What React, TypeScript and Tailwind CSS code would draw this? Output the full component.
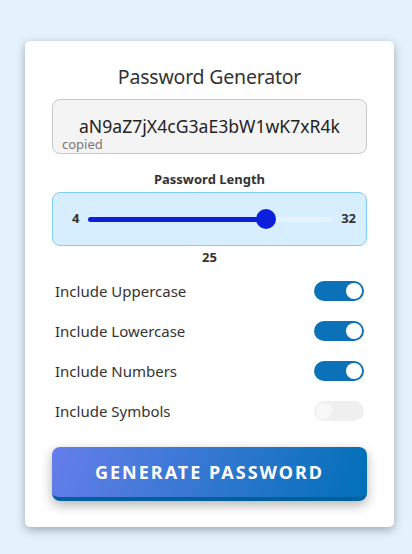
import { useState } from "react";

const options = [
  { key: "upper", label: "Include Uppercase" },
  { key: "lower", label: "Include Lowercase" },
  { key: "numbers", label: "Include Numbers" },
  { key: "symbols", label: "Include Symbols" },
];

function Toggle({ on, onClick }: { on: boolean; onClick: () => void }) {
  return (
    <button
      type="button"
      onClick={onClick}
      className={`flex h-[20px] w-[50px] items-center rounded-full px-[2px] ${
        on ? "justify-end bg-[#0b72b9]" : "justify-start bg-[#efefef]"
      }`}
    >
      <span className={`h-[16px] w-[16px] rounded-full ${on ? "bg-white" : "bg-[#f8f8f8]"}`} />
    </button>
  );
}

export default function App() {
  const [length, setLength] = useState(25);
  const [flags, setFlags] = useState<Record<string, boolean>>({
    upper: true,
    lower: true,
    numbers: true,
    symbols: false,
  });
  const frac = (length - 4) / (32 - 4);

  return (
    <div className="min-h-[554px] bg-[#e3f2fd] pt-[41px] font-['Noto_Sans',sans-serif] text-[#333]">
      {/* カード */}
      <div className="mx-[25px] w-[369px] rounded-[5px] bg-white px-[27px] pb-[26px] pt-[22px] shadow-[0_3px_10px_rgba(0,0,0,0.3)]">
        <h1 className="h-[28px] text-center text-[19.5px] tracking-[-0.2px] leading-[28px] text-[#333]">Password Generator</h1>

        {/* パスワード表示 */}
        <div className="relative mt-[8px] flex h-[55px] items-center justify-center rounded-[8px] border border-[#c8c8c8] bg-[#f4f4f4] pb-[1px]">
          <span className="text-[17.6px] leading-[17px] text-[#222]">aN9aZ7jX4cG3aE3bW1wK7xR4k</span>
          <span className="absolute bottom-[2px] left-[9px] text-[13px] leading-[13px] text-[#777]">copied</span>
        </div>

        <div className="mt-[16px] text-center text-[13px] font-bold leading-[18px]">Password Length</div>

        {/* スライダー */}
        <div className="mt-[4px] flex h-[54px] items-center rounded-[8px] border border-[#80cdf8] bg-[#d6eefd] pl-[19px] pr-[10px]">
          <span className="w-[8px] text-[13px] font-bold">4</span>
          <div className="relative ml-[8px] h-[20px] flex-1">
            <div className="absolute left-0 right-0 top-[8px] h-[5px] rounded-full bg-[#e6f3fd]" />
            <div
              className="absolute left-0 top-[8px] h-[5px] rounded-full bg-[#0b1fdc]"
              style={{ width: `calc(${frac} * (100% - 20px) + 10px)` }}
            />
            <div
              className="absolute top-0 h-[20px] w-[20px] rounded-full bg-[#0b1fdc]"
              style={{ left: `calc(${frac} * (100% - 20px))` }}
            />
            <input
              type="range"
              min={4}
              max={32}
              value={length}
              onChange={(e) => setLength(Number(e.target.value))}
              className="absolute inset-0 w-full opacity-0"
            />
          </div>
          <span className="ml-[9px] text-[13px] font-bold">32</span>
        </div>
        <div className="mt-[2px] text-center text-[13px] font-bold leading-[18px]">{length}</div>

        {/* オプション */}
        <div className="mt-[5px]">
          {options.map((opt) => (
            <div key={opt.key} className="flex h-[40px] items-center justify-between px-[3px]">
              <span className="text-[15px] leading-[20px] text-[#333]">{opt.label}</span>
              <Toggle
                on={flags[opt.key]}
                onClick={() => setFlags({ ...flags, [opt.key]: !flags[opt.key] })}
              />
            </div>
          ))}
        </div>

        <button
          type="button"
          className="mt-[16px] h-[54px] w-full rounded-[8px] border-b-4 border-[#005f9e] bg-[linear-gradient(110deg,#667eea_0%,#0070b8_100%)] text-[18px] font-bold tracking-[2px] text-white shadow-[0_4px_12px_rgba(0,0,0,0.3)]"
        >
          GENERATE PASSWORD
        </button>
      </div>
    </div>
  );
}
